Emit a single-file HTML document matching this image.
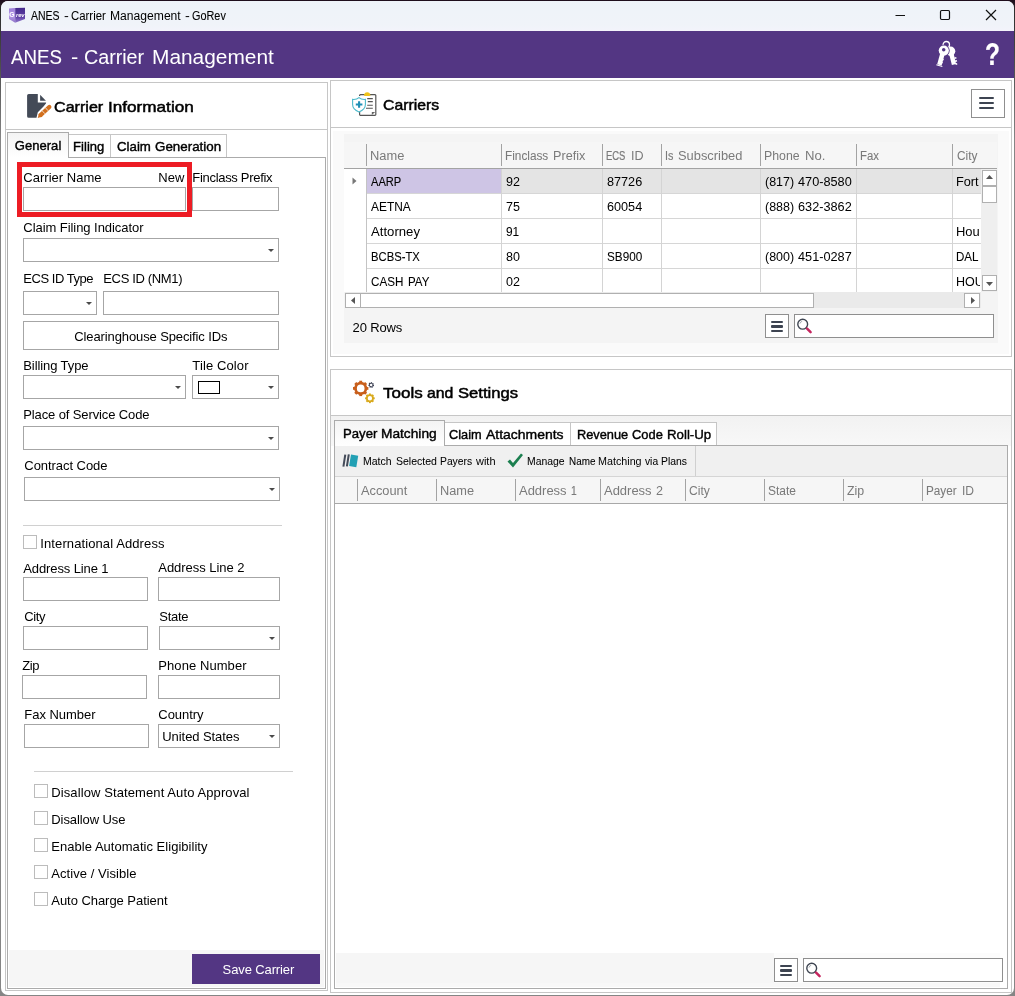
<!DOCTYPE html>
<html lang="en"><head><meta charset="utf-8"><title>ANES - Carrier Management - GoRev</title>
<style>
html,body{margin:0;padding:0;background:#838383;}
body{background:linear-gradient(to bottom,#1e0c1c 0,#2c2c2c 10px,#4a4a4a 60px,#858585 140px);}
body{width:1015px;height:996px;overflow:hidden;position:relative;font-family:"Liberation Sans",Arial,sans-serif;font-size:13px;}
#win div,#win span,#win svg{position:absolute;box-sizing:border-box;}
#win{position:absolute;left:0;top:0;width:1015px;height:996px;overflow:hidden;will-change:transform;}
.t{white-space:nowrap;}
</style></head><body><div id="win">
<div style="left:1px;top:1px;width:1013px;height:994px;border-radius:7px;background:#fff;overflow:hidden"><div style="left:-1px;top:-1px;width:1015px;height:996px">
<div style="left:0px;top:0px;width:1015px;height:31px;background:linear-gradient(#eef3f9,#f0f3f9 80%,#f3f3fb);"></div>
<div style="left:0px;top:31px;width:1015px;height:47px;background:#533683;"></div>
<svg style="left:8px;top:7px" width="18" height="17" viewBox="0 0 18 17">
<defs><linearGradient id="cg" x1="0" y1="0" x2="0" y2="1"><stop offset="0" stop-color="#45298c"/><stop offset="0.6" stop-color="#5e40a4"/><stop offset="1" stop-color="#9176cc"/></linearGradient>
<linearGradient id="cl" x1="0" y1="0" x2="0" y2="1"><stop offset="0" stop-color="#9a7bd6"/><stop offset="0.5" stop-color="#b79ce8"/><stop offset="1" stop-color="#8f72c8"/></linearGradient></defs>
<polygon points="1,1.400 7.200,1 7.200,15.800 1,12" fill="url(#cl)"/>
<polygon points="7.200,1 17,0.800 17,12 7.200,15.800" fill="url(#cg)"/>
<text x="1.300" y="10.200" font-size="6.800" font-weight="bold" fill="#fff" font-family="Liberation Sans, sans-serif">G</text>
<text x="7.900" y="10.300" font-size="5.800" font-weight="bold" font-style="italic" fill="#fff" font-family="Liberation Sans, sans-serif">rev</text>
</svg>
<div class="t" style="left:30.80px;top:5.84px;font-size:12px;line-height:20px;color:#000;transform:scaleX(0.8746);transform-origin:0 0;-webkit-text-stroke:0.13px #000;">ANES</div>
<div class="t" style="left:63.90px;top:5.84px;font-size:12px;line-height:20px;color:#000;transform:scaleX(1.1940);transform-origin:0 0;">-</div>
<div class="t" style="left:71.20px;top:5.84px;font-size:12px;line-height:20px;color:#000;transform:scaleX(0.9493);transform-origin:0 0;-webkit-text-stroke:0.05px #000;">Carrier</div>
<div class="t" style="left:109.80px;top:5.84px;font-size:12px;line-height:20px;color:#000;transform:scaleX(1.0097);transform-origin:0 0;">Management</div>
<div class="t" style="left:185.00px;top:5.84px;font-size:12px;line-height:20px;color:#000;transform:scaleX(1.1940);transform-origin:0 0;">-</div>
<div class="t" style="left:192.20px;top:5.84px;font-size:12px;line-height:20px;color:#000;transform:scaleX(0.9057);transform-origin:0 0;-webkit-text-stroke:0.09px #000;">GoRev</div>
<svg style="left:885px;top:0" width="130" height="31" viewBox="0 0 130 31">
<path d="M10.5 15.5H20" stroke="#111" stroke-width="1.2" fill="none"/>
<rect x="55.5" y="10.5" width="9" height="9" rx="1.2" stroke="#111" stroke-width="1.2" fill="none"/>
<path d="M101 10L111 20M111 10L101 20" stroke="#111" stroke-width="1.2" fill="none"/>
</svg>
<div class="t" style="left:11.40px;top:46.90px;font-size:20.5px;line-height:20px;color:#fff;transform:scaleX(0.9112);transform-origin:0 0;-webkit-text-stroke:0.09px #fff;">ANES</div>
<div class="t" style="left:70.50px;top:46.90px;font-size:20.5px;line-height:20px;color:#fff;transform:scaleX(1.0630);transform-origin:0 0;">-</div>
<div class="t" style="left:83.50px;top:46.90px;font-size:20.5px;line-height:20px;color:#fff;transform:scaleX(0.9596);transform-origin:0 0;-webkit-text-stroke:0.04px #fff;">Carrier</div>
<div class="t" style="left:152.20px;top:46.90px;font-size:20.5px;line-height:20px;color:#fff;transform:scaleX(1.0182);transform-origin:0 0;">Management</div>
<div class="t" style="left:985.30px;top:44.25px;font-size:31.6px;line-height:20px;color:#fff;font-weight:bold;transform:scaleX(0.7730);transform-origin:0 0;-webkit-text-stroke:0.23px #fff;">?</div>
<svg style="left:934px;top:40px" width="24" height="28" viewBox="0 0 24 28">
<circle cx="12.300" cy="4.700" r="3.200" fill="none" stroke="#fff" stroke-width="1.300"/>
<g stroke="#fff" fill="#fff" stroke-linecap="butt">
<circle cx="16.600" cy="11.300" r="4.700" stroke="none"/>
<path d="M16.800 11.500L20 24.600" stroke-width="4.400" fill="none"/>
<path d="M20.400 18.200l2 -.5M21 21.300l2 -.5M21.600 24.200l1.600 -.4" stroke-width="1.700" fill="none"/>
</g>
<g stroke="#533683" fill="#533683">
<circle cx="9.800" cy="10.600" r="5.900" stroke="none"/>
<path d="M9.200 11L5.200 25" stroke-width="6.400" fill="none"/>
</g>
<g stroke="#fff" fill="#fff">
<circle cx="9.800" cy="10.600" r="5.100" stroke="none"/>
<path d="M9.200 11L5.400 24.800" stroke-width="4.600" fill="none"/>
<path d="M2.500 24.300l6 1.700-.3 1-6-1.700z" stroke="none"/>
<path d="M7.800 19.300l1.800 .5M7 22.200l1.600 .45" stroke-width="1.600" fill="none"/>
</g>
<circle cx="9.700" cy="9.700" r="1.750" fill="#533683"/>
</svg>
<div style="left:5px;top:82px;width:323px;height:909px;background:#fff;border:1px solid #c6c6c6;"></div>
<div style="left:6px;top:129px;width:321px;height:1px;background:#c6c6c6;"></div>
<svg style="left:26px;top:92px" width="28" height="28" viewBox="0 0 28 28">
<path d="M1.100 3.500a1.600 1.600 0 0 1 1.600-1.600h9.100v8.500h8.300v.9l-2.600 3.300-5.700 5.600-1.300 5.600h-7.800a1.600 1.600 0 0 1-1.600-1.600z" fill="#434a57"/>
<path d="M14.100 2.700l5.800 6h-5.800z" fill="#434a57"/>
<path d="M11.700 26l1.500-4.500 3.100 3z" fill="#c8651a"/>
<path d="M14.700 23L23.300 15" stroke="#d2701f" stroke-width="4.300" stroke-linecap="round" fill="none"/>
<path d="M14.700 23L13.900 23.800" stroke="#d2701f" stroke-width="4.300" fill="none"/>
<path d="M15.600 18.200l3.400 3.600M18.900 15.200l3.300 3.600" stroke="#f6e3d2" stroke-width="0.900" fill="none"/>
</svg>
<div class="t" style="left:54.40px;top:96.80px;font-size:15px;line-height:20px;color:#000;-webkit-text-stroke:0.5px #000;transform:scaleX(1.0736);transform-origin:0 0;">Carrier</div>
<div class="t" style="left:107.90px;top:96.80px;font-size:15px;line-height:20px;color:#000;-webkit-text-stroke:0.5px #000;transform:scaleX(1.1429);transform-origin:0 0;">Information</div>
<div style="left:67px;top:134px;width:44px;height:24px;background:#fff;border:1px solid #c6c6c6;"></div>
<div style="left:110px;top:134px;width:117px;height:24px;background:#fff;border:1px solid #c6c6c6;"></div>
<div style="left:7px;top:157px;width:319px;height:832px;background:#fff;border:1px solid #ababab;"></div>
<div style="left:7px;top:132px;width:62px;height:26px;background:#fff;border:1px solid #ababab;border-bottom:none;background:linear-gradient(#f4f4f4,#fff);"></div>
<div class="t" style="left:14.80px;top:135.50px;font-size:13px;line-height:20px;color:#000;-webkit-text-stroke:0.4px #000;letter-spacing:0.037px;">General</div>
<div class="t" style="left:73.10px;top:136.50px;font-size:13px;line-height:20px;color:#000;-webkit-text-stroke:0.4px #000;letter-spacing:0.026px;">Filing</div>
<div class="t" style="left:116.90px;top:136.50px;font-size:13px;line-height:20px;color:#000;-webkit-text-stroke:0.4px #000;transform:scaleX(1.0206);transform-origin:0 0;">Claim</div>
<div class="t" style="left:154.60px;top:136.50px;font-size:13px;line-height:20px;color:#000;-webkit-text-stroke:0.4px #000;transform:scaleX(1.0287);transform-origin:0 0;">Generation</div>
<div style="left:17px;top:162px;width:175px;height:55px;border:5px solid #ed1c24;"></div>
<div class="t" style="left:23.30px;top:167.50px;font-size:13px;line-height:20px;color:#000;letter-spacing:0.018px;">Carrier Name</div>
<div class="t" style="left:158.30px;top:167.50px;font-size:13px;line-height:20px;color:#000;letter-spacing:0.067px;">New</div>
<div class="t" style="left:192.30px;top:167.50px;font-size:13px;line-height:20px;color:#000;letter-spacing:-0.307px;">Finclass Prefix</div>
<div style="left:23px;top:187px;width:163px;height:24px;background:#fff;border:1px solid #a6a6a6;"></div>
<div style="left:192px;top:187px;width:87px;height:24px;background:#fff;border:1px solid #a6a6a6;"></div>
<div class="t" style="left:23.30px;top:217.50px;font-size:13px;line-height:20px;color:#000;letter-spacing:-0.055px;">Claim Filing Indicator</div>
<div style="left:23px;top:238px;width:256px;height:24px;background:#fff;border:1px solid #a6a6a6;"></div>
<svg style="left:268px;top:249px" width="6" height="3" viewBox="0 0 6 3"><path d="M0 0h6L3 3z" fill="#4a4a4a"/></svg>
<div class="t" style="left:23.30px;top:268.50px;font-size:13px;line-height:20px;color:#000;letter-spacing:-0.468px;">ECS ID Type</div>
<div class="t" style="left:103.30px;top:268.50px;font-size:13px;line-height:20px;color:#000;letter-spacing:-0.352px;">ECS ID (NM1)</div>
<div style="left:23px;top:291px;width:74px;height:24px;background:#fff;border:1px solid #a6a6a6;"></div>
<svg style="left:86px;top:302px" width="6" height="3" viewBox="0 0 6 3"><path d="M0 0h6L3 3z" fill="#4a4a4a"/></svg>
<div style="left:103px;top:291px;width:176px;height:24px;background:#fff;border:1px solid #a6a6a6;"></div>
<div style="left:23px;top:321px;width:256px;height:29px;background:#fff;border:1px solid #a6a6a6;"></div>
<div class="t" style="left:74.30px;top:326.70px;font-size:13px;line-height:20px;color:#000;letter-spacing:-0.115px;">Clearinghouse Specific IDs</div>
<div class="t" style="left:23.30px;top:355.50px;font-size:13px;line-height:20px;color:#000;letter-spacing:-0.094px;">Billing Type</div>
<div class="t" style="left:192.30px;top:355.50px;font-size:13px;line-height:20px;color:#000;letter-spacing:0.120px;">Tile Color</div>
<div style="left:23px;top:375px;width:163px;height:24px;background:#fff;border:1px solid #a6a6a6;"></div>
<svg style="left:175px;top:386px" width="6" height="3" viewBox="0 0 6 3"><path d="M0 0h6L3 3z" fill="#4a4a4a"/></svg>
<div style="left:192px;top:375px;width:87px;height:24px;background:#fff;border:1px solid #a6a6a6;"></div>
<svg style="left:268px;top:386px" width="6" height="3" viewBox="0 0 6 3"><path d="M0 0h6L3 3z" fill="#4a4a4a"/></svg>
<div style="left:198px;top:381px;width:22px;height:13px;background:#fff;border:1px solid #000;"></div>
<div class="t" style="left:23.30px;top:404.50px;font-size:13px;line-height:20px;color:#000;letter-spacing:-0.122px;">Place of Service Code</div>
<div style="left:23px;top:426px;width:256px;height:24px;background:#fff;border:1px solid #a6a6a6;"></div>
<svg style="left:268px;top:437px" width="6" height="3" viewBox="0 0 6 3"><path d="M0 0h6L3 3z" fill="#4a4a4a"/></svg>
<div class="t" style="left:24.30px;top:455.50px;font-size:13px;line-height:20px;color:#000;letter-spacing:-0.054px;">Contract Code</div>
<div style="left:24px;top:477px;width:256px;height:24px;background:#fff;border:1px solid #a6a6a6;"></div>
<svg style="left:269px;top:488px" width="6" height="3" viewBox="0 0 6 3"><path d="M0 0h6L3 3z" fill="#4a4a4a"/></svg>
<div style="left:23px;top:525px;width:259px;height:1px;background:#d0d0d0;"></div>
<div style="left:23px;top:535px;width:14px;height:14px;background:#fff;border:1px solid #bcbcbc;"></div>
<div class="t" style="left:40.30px;top:533.50px;font-size:13px;line-height:20px;color:#000;letter-spacing:0.103px;">International Address</div>
<div class="t" style="left:23.30px;top:558.50px;font-size:13px;line-height:20px;color:#000;letter-spacing:-0.116px;">Address Line 1</div>
<div class="t" style="left:158.30px;top:557.50px;font-size:13px;line-height:20px;color:#000;letter-spacing:-0.039px;">Address Line 2</div>
<div style="left:23px;top:577px;width:125px;height:24px;background:#fff;border:1px solid #a6a6a6;"></div>
<div style="left:158px;top:577px;width:122px;height:24px;background:#fff;border:1px solid #a6a6a6;"></div>
<div class="t" style="left:24.30px;top:606.50px;font-size:13px;line-height:20px;color:#000;letter-spacing:-0.387px;">City</div>
<div class="t" style="left:159.30px;top:606.50px;font-size:13px;line-height:20px;color:#000;letter-spacing:-0.289px;">State</div>
<div style="left:23px;top:626px;width:125px;height:24px;background:#fff;border:1px solid #a6a6a6;"></div>
<div style="left:159px;top:626px;width:121px;height:24px;background:#fff;border:1px solid #a6a6a6;"></div>
<svg style="left:269px;top:637px" width="6" height="3" viewBox="0 0 6 3"><path d="M0 0h6L3 3z" fill="#4a4a4a"/></svg>
<div class="t" style="left:22.30px;top:655.50px;font-size:13px;line-height:20px;color:#000;letter-spacing:-0.435px;">Zip</div>
<div class="t" style="left:158.30px;top:655.50px;font-size:13px;line-height:20px;color:#000;letter-spacing:0.070px;">Phone Number</div>
<div style="left:22px;top:675px;width:125px;height:24px;background:#fff;border:1px solid #a6a6a6;"></div>
<div style="left:158px;top:675px;width:122px;height:24px;background:#fff;border:1px solid #a6a6a6;"></div>
<div class="t" style="left:24.30px;top:704.50px;font-size:13px;line-height:20px;color:#000;letter-spacing:-0.033px;">Fax Number</div>
<div class="t" style="left:158.30px;top:704.50px;font-size:13px;line-height:20px;color:#000;letter-spacing:-0.050px;">Country</div>
<div style="left:24px;top:724px;width:125px;height:24px;background:#fff;border:1px solid #a6a6a6;"></div>
<div style="left:158px;top:724px;width:122px;height:24px;background:#fff;border:1px solid #a6a6a6;"></div>
<svg style="left:269px;top:735px" width="6" height="3" viewBox="0 0 6 3"><path d="M0 0h6L3 3z" fill="#4a4a4a"/></svg>
<div class="t" style="left:162.30px;top:726.50px;font-size:13px;line-height:20px;color:#000;letter-spacing:-0.072px;">United States</div>
<div style="left:34px;top:771px;width:259px;height:1px;background:#d0d0d0;"></div>
<div style="left:34px;top:784px;width:14px;height:14px;background:#fff;border:1px solid #bcbcbc;"></div>
<div class="t" style="left:51.30px;top:782.50px;font-size:13px;line-height:20px;color:#000;letter-spacing:0.099px;">Disallow Statement Auto Approval</div>
<div style="left:34px;top:811px;width:14px;height:14px;background:#fff;border:1px solid #bcbcbc;"></div>
<div class="t" style="left:51.30px;top:809.50px;font-size:13px;line-height:20px;color:#000;letter-spacing:-0.085px;">Disallow Use</div>
<div style="left:34px;top:838px;width:14px;height:14px;background:#fff;border:1px solid #bcbcbc;"></div>
<div class="t" style="left:51.30px;top:836.50px;font-size:13px;line-height:20px;color:#000;letter-spacing:0.031px;">Enable Automatic Eligibility</div>
<div style="left:34px;top:865px;width:14px;height:14px;background:#fff;border:1px solid #bcbcbc;"></div>
<div class="t" style="left:51.30px;top:863.50px;font-size:13px;line-height:20px;color:#000;letter-spacing:0.060px;">Active / Visible</div>
<div style="left:34px;top:892px;width:14px;height:14px;background:#fff;border:1px solid #bcbcbc;"></div>
<div class="t" style="left:51.30px;top:890.50px;font-size:13px;line-height:20px;color:#000;letter-spacing:-0.048px;">Auto Charge Patient</div>
<div style="left:9px;top:950px;width:315px;height:37px;background:#f6f6f6;"></div>
<div style="left:192px;top:954px;width:128px;height:30px;background:#533683;"></div>
<div class="t" style="left:222.60px;top:959.50px;font-size:13px;line-height:20px;color:#fff;letter-spacing:-0.118px;">Save Carrier</div>
<div style="left:330px;top:80px;width:682px;height:277px;background:#fff;border:1px solid #c6c6c6;"></div>
<div style="left:331px;top:127px;width:680px;height:1px;background:#c6c6c6;"></div>
<div style="left:333px;top:131px;width:676px;height:223px;background:#fafafa;"></div>
<div style="left:344px;top:134px;width:654px;height:209px;background:#f4f4f4;"></div>
<svg style="left:351px;top:90px" width="27" height="28" viewBox="0 0 27 28">
<path d="M8.600 4.600h15.400a.8 .8 0 0 1 .8 .8v19.200a.8 .8 0 0 1 -.8 .8h-14.600a.8 .8 0 0 1 -.8-.8z" fill="#fff"/>
<path d="M8.600 6v-.6a.8 .8 0 0 1 .8-.8h14.600a.8 .8 0 0 1 .8 .8v19.200a.8 .8 0 0 1 -.8 .8h-14.600a.8 .8 0 0 1 -.8-.8v-3" fill="none" stroke="#555" stroke-width="1.200"/>
<path d="M13 5c.3-1.500 1.300-2.800 3.200-2.800s2.900 1.300 3.200 2.800c.1 .6-.3 .9-.9 .9h-4.600c-.6 0-1-.3-.9-.9z" fill="#efc31a"/>
<path d="M16.200 8.600h5.600M16.800 11.600h5M16.200 15.300h5.600M15 18.300h6.800" stroke="#555" stroke-width="1.100"/>
<path d="M20.800 25v-3h3.400z" fill="#666"/>
<path d="M8 7.600c-1.500 1.400-4 2-6.400 1.800v5.100c0 4 2.900 6 6.400 7.400 3.500-1.400 6.400-3.400 6.400-7.400v-5.100c-2.400 .2-4.900-.4-6.400-1.800z" fill="#fff" stroke="#4ab9cb" stroke-width="1.100"/>
<path d="M8.100 11.200v6.600M4.800 14.500h6.600" stroke="#1f8fb5" stroke-width="2.100"/>
</svg>
<div class="t" style="left:383.00px;top:94.80px;font-size:15px;line-height:20px;color:#000;-webkit-text-stroke:0.5px #000;transform:scaleX(1.0502);transform-origin:0 0;">Carriers</div>
<div style="left:971px;top:89px;width:34px;height:29px;background:#fff;border:1px solid #8f8f8f;"></div>
<div style="left:979px;top:96.9px;width:15px;height:2.3px;background:#3d4451;border-radius:1px;"></div>
<div style="left:979px;top:101.9px;width:15px;height:2.3px;background:#3d4451;border-radius:1px;"></div>
<div style="left:979px;top:106.9px;width:15px;height:2.3px;background:#3d4451;border-radius:1px;"></div>
<div style="left:344px;top:142px;width:653px;height:27px;background:#f6f6f6;"></div>
<div style="left:366px;top:144px;width:1px;height:22px;background:#a3a3a3;"></div>
<div style="left:501px;top:144px;width:1px;height:22px;background:#a3a3a3;"></div>
<div style="left:602px;top:144px;width:1px;height:22px;background:#a3a3a3;"></div>
<div style="left:661px;top:144px;width:1px;height:22px;background:#a3a3a3;"></div>
<div style="left:760px;top:144px;width:1px;height:22px;background:#a3a3a3;"></div>
<div style="left:856px;top:144px;width:1px;height:22px;background:#a3a3a3;"></div>
<div style="left:952px;top:144px;width:1px;height:22px;background:#a3a3a3;"></div>
<div class="t" style="left:370.20px;top:145.67px;font-size:12.5px;line-height:20px;color:#7a7a7a;transform:scaleX(1.0307);transform-origin:0 0;">Name</div>
<div class="t" style="left:505.20px;top:145.67px;font-size:12.5px;line-height:20px;color:#7a7a7a;transform:scaleX(0.9439);transform-origin:0 0;-webkit-text-stroke:0.06px #7a7a7a;">Finclass</div>
<div class="t" style="left:553.10px;top:145.67px;font-size:12.5px;line-height:20px;color:#7a7a7a;transform:scaleX(1.0114);transform-origin:0 0;">Prefix</div>
<div class="t" style="left:606.40px;top:145.67px;font-size:12.5px;line-height:20px;color:#7a7a7a;transform:scaleX(0.7552);transform-origin:0 0;-webkit-text-stroke:0.24px #7a7a7a;">ECS</div>
<div class="t" style="left:630.60px;top:145.67px;font-size:12.5px;line-height:20px;color:#7a7a7a;transform:scaleX(1.0080);transform-origin:0 0;">ID</div>
<div class="t" style="left:665.10px;top:145.67px;font-size:12.5px;line-height:20px;color:#7a7a7a;transform:scaleX(0.8615);transform-origin:0 0;-webkit-text-stroke:0.14px #7a7a7a;">Is</div>
<div class="t" style="left:678.30px;top:145.67px;font-size:12.5px;line-height:20px;color:#7a7a7a;transform:scaleX(1.0294);transform-origin:0 0;">Subscribed</div>
<div class="t" style="left:764.00px;top:145.67px;font-size:12.5px;line-height:20px;color:#7a7a7a;transform:scaleX(0.9855);transform-origin:0 0;">Phone</div>
<div class="t" style="left:804.60px;top:145.67px;font-size:12.5px;line-height:20px;color:#7a7a7a;transform:scaleX(1.0495);transform-origin:0 0;">No.</div>
<div class="t" style="left:860.00px;top:145.67px;font-size:12.5px;line-height:20px;color:#7a7a7a;transform:scaleX(0.9081);transform-origin:0 0;-webkit-text-stroke:0.09px #7a7a7a;">Fax</div>
<div class="t" style="left:956.60px;top:145.67px;font-size:12.5px;line-height:20px;color:#7a7a7a;transform:scaleX(0.9488);transform-origin:0 0;-webkit-text-stroke:0.05px #7a7a7a;">City</div>
<div style="left:344px;top:169px;width:637px;height:123px;background:#fff;"></div>
<div style="left:366px;top:169px;width:615px;height:24px;background:#e4e4e4;"></div>
<div style="left:367px;top:169px;width:134px;height:24px;background:#cec5e5;"></div>
<div style="left:366px;top:193px;width:615px;height:1px;background:#d6d6d6;"></div>
<div style="left:366px;top:218px;width:615px;height:1px;background:#d6d6d6;"></div>
<div style="left:366px;top:243px;width:615px;height:1px;background:#d6d6d6;"></div>
<div style="left:366px;top:268px;width:615px;height:1px;background:#d6d6d6;"></div>
<div style="left:501px;top:169px;width:1px;height:123px;background:#d4d4d4;"></div>
<div style="left:602px;top:169px;width:1px;height:123px;background:#d4d4d4;"></div>
<div style="left:661px;top:169px;width:1px;height:123px;background:#d4d4d4;"></div>
<div style="left:760px;top:169px;width:1px;height:123px;background:#d4d4d4;"></div>
<div style="left:856px;top:169px;width:1px;height:123px;background:#d4d4d4;"></div>
<div style="left:952px;top:169px;width:1px;height:123px;background:#d4d4d4;"></div>
<div style="left:366px;top:169px;width:1px;height:123px;background:#c4c4c4;"></div>
<div style="left:344px;top:168px;width:653px;height:1px;background:#a3a3a3;"></div>
<div style="left:344px;top:169px;width:636.4px;height:123px;overflow:hidden"><div style="left:-344px;top:-169px;width:1015px;height:996px">
<div class="t" style="left:371.10px;top:171.67px;font-size:12.5px;line-height:20px;color:#000;transform:scaleX(0.8895);transform-origin:0 0;-webkit-text-stroke:0.11px #000;">AARP</div>
<div class="t" style="left:506.10px;top:171.67px;font-size:12.5px;line-height:20px;color:#000;transform:scaleX(1.0018);transform-origin:0 0;">92</div>
<div class="t" style="left:607.00px;top:171.67px;font-size:12.5px;line-height:20px;color:#000;transform:scaleX(1.0129);transform-origin:0 0;">87726</div>
<div class="t" style="left:764.90px;top:171.67px;font-size:12.5px;line-height:20px;color:#000;transform:scaleX(0.9970);transform-origin:0 0;">(817)</div>
<div class="t" style="left:798.20px;top:171.67px;font-size:12.5px;line-height:20px;color:#000;transform:scaleX(1.0168);transform-origin:0 0;">470-8580</div>
<div class="t" style="left:956.40px;top:171.67px;font-size:12.5px;line-height:20px;color:#000;transform:scaleX(1.0186);transform-origin:0 0;">Fort Worth</div>
<div class="t" style="left:371.10px;top:196.67px;font-size:12.5px;line-height:20px;color:#000;transform:scaleX(0.9523);transform-origin:0 0;-webkit-text-stroke:0.05px #000;">AETNA</div>
<div class="t" style="left:506.10px;top:196.67px;font-size:12.5px;line-height:20px;color:#000;transform:scaleX(1.0018);transform-origin:0 0;">75</div>
<div class="t" style="left:607.00px;top:196.67px;font-size:12.5px;line-height:20px;color:#000;transform:scaleX(1.0129);transform-origin:0 0;">60054</div>
<div class="t" style="left:764.90px;top:196.67px;font-size:12.5px;line-height:20px;color:#000;transform:scaleX(0.9970);transform-origin:0 0;">(888)</div>
<div class="t" style="left:798.20px;top:196.67px;font-size:12.5px;line-height:20px;color:#000;transform:scaleX(1.0168);transform-origin:0 0;">632-3862</div>
<div class="t" style="left:371.10px;top:221.67px;font-size:12.5px;line-height:20px;color:#000;transform:scaleX(1.0523);transform-origin:0 0;">Attorney</div>
<div class="t" style="left:506.10px;top:221.67px;font-size:12.5px;line-height:20px;color:#000;transform:scaleX(0.9514);transform-origin:0 0;-webkit-text-stroke:0.05px #000;">91</div>
<div class="t" style="left:956.40px;top:221.67px;font-size:12.5px;line-height:20px;color:#000;transform:scaleX(1.0352);transform-origin:0 0;">Houston</div>
<div class="t" style="left:371.30px;top:246.67px;font-size:12.5px;line-height:20px;color:#000;transform:scaleX(0.9006);transform-origin:0 0;-webkit-text-stroke:0.10px #000;">BCBS-TX</div>
<div class="t" style="left:506.10px;top:246.67px;font-size:12.5px;line-height:20px;color:#000;transform:scaleX(1.0018);transform-origin:0 0;">80</div>
<div class="t" style="left:607.00px;top:246.67px;font-size:12.5px;line-height:20px;color:#000;transform:scaleX(0.9371);transform-origin:0 0;-webkit-text-stroke:0.06px #000;">SB900</div>
<div class="t" style="left:764.90px;top:246.67px;font-size:12.5px;line-height:20px;color:#000;transform:scaleX(0.9970);transform-origin:0 0;">(800)</div>
<div class="t" style="left:798.20px;top:246.67px;font-size:12.5px;line-height:20px;color:#000;transform:scaleX(1.0168);transform-origin:0 0;">451-0287</div>
<div class="t" style="left:956.40px;top:246.67px;font-size:12.5px;line-height:20px;color:#000;transform:scaleX(0.9254);transform-origin:0 0;-webkit-text-stroke:0.07px #000;">DAL</div>
<div class="t" style="left:371.30px;top:271.67px;font-size:12.5px;line-height:20px;color:#000;transform:scaleX(0.9324);transform-origin:0 0;-webkit-text-stroke:0.07px #000;">CASH</div>
<div class="t" style="left:407.60px;top:271.67px;font-size:12.5px;line-height:20px;color:#000;transform:scaleX(0.9229);transform-origin:0 0;-webkit-text-stroke:0.08px #000;">PAY</div>
<div class="t" style="left:506.10px;top:271.67px;font-size:12.5px;line-height:20px;color:#000;transform:scaleX(1.0018);transform-origin:0 0;">02</div>
<div class="t" style="left:956.40px;top:271.67px;font-size:12.5px;line-height:20px;color:#000;transform:scaleX(1.0022);transform-origin:0 0;">HOUSTON</div>
</div></div>
<svg style="left:352px;top:177px" width="5" height="8" viewBox="0 0 5 8"><path d="M0.500 0.500L4.500 4 0.500 7.500z" fill="#777"/></svg>
<div style="left:981px;top:169px;width:16px;height:123px;background:#efefef;"></div>
<div style="left:982px;top:170px;width:15px;height:16px;background:#fff;border:1px solid #b0b0b0;"></div>
<div style="left:982px;top:186px;width:15px;height:17px;background:#fff;border:1px solid #b0b0b0;"></div>
<div style="left:982px;top:275px;width:15px;height:16px;background:#fff;border:1px solid #b0b0b0;"></div>
<svg style="left:986px;top:175px" width="7" height="4" viewBox="0 0 7 4"><path d="M0 4h7L3.500 0z" fill="#555"/></svg>
<svg style="left:986px;top:282px" width="7" height="4" viewBox="0 0 7 4"><path d="M0 0h7L3.500 4z" fill="#555"/></svg>
<div style="left:345px;top:292px;width:636px;height:16px;background:#eaeaea;"></div>
<div style="left:345px;top:293px;width:16px;height:15px;background:#fff;border:1px solid #b0b0b0;"></div>
<div style="left:360px;top:293px;width:454px;height:15px;background:#fff;border:1px solid #b0b0b0;"></div>
<div style="left:964px;top:293px;width:16px;height:15px;background:#fff;border:1px solid #b0b0b0;"></div>
<svg style="left:351px;top:297px" width="4" height="7" viewBox="0 0 4 7"><path d="M4 0v7L0 3.500z" fill="#555"/></svg>
<svg style="left:971px;top:297px" width="4" height="7" viewBox="0 0 4 7"><path d="M0 0v7L4 3.500z" fill="#555"/></svg>
<div style="left:981px;top:292px;width:17px;height:16px;background:#f4f4f4;"></div>
<div class="t" style="left:352.60px;top:317.50px;font-size:13px;line-height:20px;color:#000;letter-spacing:-0.145px;">20 Rows</div>
<div style="left:765px;top:314px;width:24px;height:24px;background:#fff;border:1px solid #8f8f8f;"></div>
<div style="left:771px;top:321.0px;width:12px;height:2.4px;background:#3d4451;border-radius:1px;"></div>
<div style="left:771px;top:325.3px;width:12px;height:2.4px;background:#3d4451;border-radius:1px;"></div>
<div style="left:771px;top:329.6px;width:12px;height:2.4px;background:#3d4451;border-radius:1px;"></div>
<div style="left:794px;top:314px;width:200px;height:24px;background:#fff;border:1px solid #8f8f8f;"></div>
<svg style="left:797px;top:317px" width="18" height="18" viewBox="0 0 18 18">
<circle cx="5.700" cy="7.200" r="4.900" fill="#fff" stroke="#3f4652" stroke-width="1.400"/>
<path d="M2.900 6.600a3 3 0 0 1 2.300-2.300" stroke="#9aa0a8" stroke-width="0.900" fill="none"/>
<path d="M10.100 11.700L13.600 15.200" stroke="#c5265f" stroke-width="2.500" stroke-linecap="round"/>
</svg>
<div style="left:330px;top:369px;width:682px;height:624px;background:#fff;border:1px solid #c6c6c6;"></div>
<div style="left:331px;top:415px;width:680px;height:1px;background:#c6c6c6;"></div>
<svg style="left:351px;top:378px" width="27" height="28" viewBox="0 0 27 28">
<g transform="translate(9.700,10.400) scale(0.96)">
<circle r="5.400" fill="none" stroke="#c85f1c" stroke-width="2.800"/>
<g fill="#c85f1c"><rect x="-1.500" y="-8" width="3" height="3"/><rect x="-1.500" y="5" width="3" height="3"/><rect x="-8" y="-1.500" width="3" height="3"/><rect x="5" y="-1.500" width="3" height="3"/>
<g transform="rotate(45)"><rect x="-1.500" y="-8" width="3" height="3"/><rect x="-1.500" y="5" width="3" height="3"/><rect x="-8" y="-1.500" width="3" height="3"/><rect x="5" y="-1.500" width="3" height="3"/></g></g>
</g>
<g transform="translate(20.200,7)"><circle r="2.200" fill="none" stroke="#3b3f52" stroke-width="1.300" stroke-dasharray="1.100 0.700"/><circle r="1.800" fill="none" stroke="#3b3f52" stroke-width="0.900"/></g>
<g transform="translate(18.900,20.300) scale(0.93)">
<circle r="3.300" fill="none" stroke="#d9aa1e" stroke-width="1.900"/>
<g fill="#d9aa1e"><rect x="-1" y="-5.200" width="2" height="2"/><rect x="-1" y="3.200" width="2" height="2"/><rect x="-5.200" y="-1" width="2" height="2"/><rect x="3.200" y="-1" width="2" height="2"/>
<g transform="rotate(45)"><rect x="-1" y="-5.200" width="2" height="2"/><rect x="-1" y="3.200" width="2" height="2"/><rect x="-5.200" y="-1" width="2" height="2"/><rect x="3.200" y="-1" width="2" height="2"/></g></g>
</g>
</svg>
<div class="t" style="left:383.10px;top:382.80px;font-size:15px;line-height:20px;color:#000;-webkit-text-stroke:0.5px #000;transform:scaleX(1.1335);transform-origin:0 0;">Tools</div>
<div class="t" style="left:426.90px;top:382.80px;font-size:15px;line-height:20px;color:#000;-webkit-text-stroke:0.5px #000;transform:scaleX(1.0539);transform-origin:0 0;">and</div>
<div class="t" style="left:457.90px;top:382.80px;font-size:15px;line-height:20px;color:#000;-webkit-text-stroke:0.5px #000;transform:scaleX(1.1083);transform-origin:0 0;">Settings</div>
<div style="left:331px;top:416px;width:680px;height:30px;background:linear-gradient(#f2f2f2,#f8f8f8);"></div>
<div style="left:444px;top:422px;width:127px;height:25px;background:#fff;border:1px solid #c6c6c6;"></div>
<div style="left:570px;top:422px;width:147px;height:25px;background:#fff;border:1px solid #c6c6c6;"></div>
<div style="left:334px;top:445px;width:674px;height:544px;background:#fff;border:1px solid #ababab;"></div>
<div style="left:334px;top:420px;width:111px;height:27px;background:#fff;border:1px solid #ababab;border-bottom:none;background:linear-gradient(#f4f4f4,#fff);"></div>
<div class="t" style="left:342.50px;top:423.80px;font-size:13px;line-height:20px;color:#000;-webkit-text-stroke:0.4px #000;transform:scaleX(1.0109);transform-origin:0 0;">Payer</div>
<div class="t" style="left:380.80px;top:423.80px;font-size:13px;line-height:20px;color:#000;-webkit-text-stroke:0.4px #000;transform:scaleX(1.0553);transform-origin:0 0;">Matching</div>
<div class="t" style="left:449.10px;top:424.50px;font-size:13px;line-height:20px;color:#000;-webkit-text-stroke:0.4px #000;transform:scaleX(0.9815);transform-origin:0 0;">Claim</div>
<div class="t" style="left:486.30px;top:424.50px;font-size:13px;line-height:20px;color:#000;-webkit-text-stroke:0.4px #000;transform:scaleX(1.0736);transform-origin:0 0;">Attachments</div>
<div class="t" style="left:576.50px;top:424.50px;font-size:13px;line-height:20px;color:#000;-webkit-text-stroke:0.4px #000;transform:scaleX(0.9834);transform-origin:0 0;">Revenue</div>
<div class="t" style="left:631.50px;top:424.50px;font-size:13px;line-height:20px;color:#000;-webkit-text-stroke:0.4px #000;transform:scaleX(0.9913);transform-origin:0 0;">Code</div>
<div class="t" style="left:666.90px;top:424.50px;font-size:13px;line-height:20px;color:#000;-webkit-text-stroke:0.4px #000;transform:scaleX(1.0195);transform-origin:0 0;">Roll-Up</div>
<div style="left:335px;top:446px;width:672px;height:31px;background:#f0f0f0;"></div>
<div style="left:695px;top:446px;width:1px;height:31px;background:#d0d0d0;"></div>
<div style="left:335px;top:476px;width:672px;height:1px;background:#d5d5d5;"></div>
<svg style="left:342px;top:453px" width="17" height="15" viewBox="0 0 17 15">
<path d="M2.300 1.500l2 .3-1.900 12-2-.3z" fill="#444b59"/>
<path d="M5.800 1.300l2 .3-1.900 12-2-.3z" fill="#444b59"/>
<path d="M9 1.500l7.200 1.200-1.900 11.500-7.200-1.200z" fill="#22a0b4"/>
</svg>
<div class="t" style="left:363.40px;top:451.19px;font-size:11px;line-height:20px;color:#000;transform:scaleX(0.9541);transform-origin:0 0;-webkit-text-stroke:0.05px #000;">Match</div>
<div class="t" style="left:395.60px;top:451.19px;font-size:11px;line-height:20px;color:#000;transform:scaleX(0.9558);transform-origin:0 0;-webkit-text-stroke:0.04px #000;">Selected</div>
<div class="t" style="left:439.80px;top:451.19px;font-size:11px;line-height:20px;color:#000;transform:scaleX(0.9383);transform-origin:0 0;-webkit-text-stroke:0.06px #000;">Payers</div>
<div class="t" style="left:475.75px;top:451.19px;font-size:11px;line-height:20px;color:#000;transform:scaleX(0.9982);transform-origin:0 0;">with</div>
<svg style="left:506px;top:452px" width="18" height="17" viewBox="0 0 18 17">
<path d="M1.500 9.500l2.500-2 3 3.500 8-9.500 2 1.500-10 12.500z" fill="#1b7f4f"/>
</svg>
<div class="t" style="left:527.30px;top:451.19px;font-size:11px;line-height:20px;color:#000;transform:scaleX(0.9456);transform-origin:0 0;-webkit-text-stroke:0.05px #000;">Manage</div>
<div class="t" style="left:568.50px;top:451.19px;font-size:11px;line-height:20px;color:#000;transform:scaleX(0.8989);transform-origin:0 0;-webkit-text-stroke:0.10px #000;">Name</div>
<div class="t" style="left:598.30px;top:451.19px;font-size:11px;line-height:20px;color:#000;transform:scaleX(0.9763);transform-origin:0 0;">Matching</div>
<div class="t" style="left:644.80px;top:451.19px;font-size:11px;line-height:20px;color:#000;transform:scaleX(0.9304);transform-origin:0 0;-webkit-text-stroke:0.07px #000;">via</div>
<div class="t" style="left:660.70px;top:451.19px;font-size:11px;line-height:20px;color:#000;transform:scaleX(0.9418);transform-origin:0 0;-webkit-text-stroke:0.06px #000;">Plans</div>
<div style="left:335px;top:477px;width:672px;height:27px;background:#f6f6f6;"></div>
<div style="left:357px;top:479px;width:1px;height:22px;background:#a3a3a3;"></div>
<div style="left:436px;top:479px;width:1px;height:22px;background:#a3a3a3;"></div>
<div style="left:515px;top:479px;width:1px;height:22px;background:#a3a3a3;"></div>
<div style="left:600px;top:479px;width:1px;height:22px;background:#a3a3a3;"></div>
<div style="left:685px;top:479px;width:1px;height:22px;background:#a3a3a3;"></div>
<div style="left:764px;top:479px;width:1px;height:22px;background:#a3a3a3;"></div>
<div style="left:843px;top:479px;width:1px;height:22px;background:#a3a3a3;"></div>
<div style="left:922px;top:479px;width:1px;height:22px;background:#a3a3a3;"></div>
<div class="t" style="left:360.80px;top:480.67px;font-size:12.5px;line-height:20px;color:#7a7a7a;transform:scaleX(1.0246);transform-origin:0 0;">Account</div>
<div class="t" style="left:440.30px;top:480.67px;font-size:12.5px;line-height:20px;color:#7a7a7a;transform:scaleX(1.0217);transform-origin:0 0;">Name</div>
<div class="t" style="left:519.20px;top:480.67px;font-size:12.5px;line-height:20px;color:#7a7a7a;transform:scaleX(1.0376);transform-origin:0 0;">Address</div>
<div class="t" style="left:570.80px;top:480.67px;font-size:12.5px;line-height:20px;color:#7a7a7a;transform:scaleX(0.8216);transform-origin:0 0;-webkit-text-stroke:0.18px #7a7a7a;">1</div>
<div class="t" style="left:603.90px;top:480.67px;font-size:12.5px;line-height:20px;color:#7a7a7a;transform:scaleX(1.0376);transform-origin:0 0;">Address</div>
<div class="t" style="left:655.50px;top:480.67px;font-size:12.5px;line-height:20px;color:#7a7a7a;transform:scaleX(1.0090);transform-origin:0 0;">2</div>
<div class="t" style="left:689.40px;top:480.67px;font-size:12.5px;line-height:20px;color:#7a7a7a;transform:scaleX(0.9674);transform-origin:0 0;">City</div>
<div class="t" style="left:768.40px;top:480.67px;font-size:12.5px;line-height:20px;color:#7a7a7a;transform:scaleX(0.9593);transform-origin:0 0;-webkit-text-stroke:0.04px #7a7a7a;">State</div>
<div class="t" style="left:847.40px;top:480.67px;font-size:12.5px;line-height:20px;color:#7a7a7a;transform:scaleX(0.9899);transform-origin:0 0;">Zip</div>
<div class="t" style="left:926.00px;top:480.67px;font-size:12.5px;line-height:20px;color:#7a7a7a;transform:scaleX(0.9379);transform-origin:0 0;-webkit-text-stroke:0.06px #7a7a7a;">Payer</div>
<div class="t" style="left:961.80px;top:480.67px;font-size:12.5px;line-height:20px;color:#7a7a7a;transform:scaleX(0.9680);transform-origin:0 0;">ID</div>
<div style="left:335px;top:503px;width:672px;height:1px;background:#a8a8a8;"></div>
<div style="left:336px;top:953px;width:438px;height:34px;background:#f6f6f6;"></div>
<div style="left:774px;top:953px;width:226px;height:34px;background:#fcfcfc;"></div>
<div style="left:336px;top:983px;width:664px;height:4px;background:#f8f8f8;"></div>
<div style="left:774px;top:958px;width:24px;height:24px;background:#fff;border:1px solid #8f8f8f;"></div>
<div style="left:780px;top:965.0px;width:12px;height:2.4px;background:#3d4451;border-radius:1px;"></div>
<div style="left:780px;top:969.3px;width:12px;height:2.4px;background:#3d4451;border-radius:1px;"></div>
<div style="left:780px;top:973.6px;width:12px;height:2.4px;background:#3d4451;border-radius:1px;"></div>
<div style="left:803px;top:958px;width:200px;height:24px;background:#fff;border:1px solid #8f8f8f;"></div>
<svg style="left:806px;top:961px" width="18" height="18" viewBox="0 0 18 18">
<circle cx="5.700" cy="7.200" r="4.900" fill="#fff" stroke="#3f4652" stroke-width="1.400"/>
<path d="M2.900 6.600a3 3 0 0 1 2.300-2.300" stroke="#9aa0a8" stroke-width="0.900" fill="none"/>
<path d="M10.100 11.700L13.600 15.200" stroke="#c5265f" stroke-width="2.500" stroke-linecap="round"/>
</svg>
</div></div>
</div></body></html>
